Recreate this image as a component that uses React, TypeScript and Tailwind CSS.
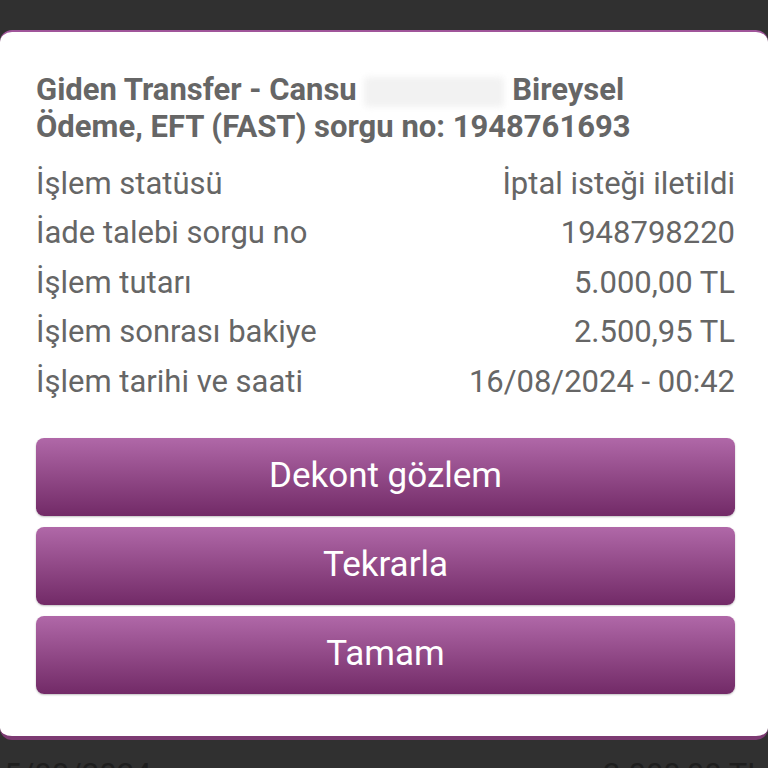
import { useState } from "react";

type Row = { label: string; value: string };

const rows: Row[] = [
  { label: "İşlem statüsü", value: "İptal isteği iletildi" },
  { label: "İade talebi sorgu no", value: "1948798220" },
  { label: "İşlem tutarı", value: "5.000,00 TL" },
  { label: "İşlem sonrası bakiye", value: "2.500,95 TL" },
  { label: "İşlem tarihi ve saati", value: "16/08/2024 - 00:42" },
];

const buttons = ["Dekont gözlem", "Tekrarla", "Tamam"];

export default function App() {
  const [open, setOpen] = useState(true);

  return (
    <div
      className="w-[768px] h-[768px] overflow-hidden bg-[#303030] flex flex-col"
      style={{ fontFamily: "Roboto, 'Noto Sans', sans-serif" }}
    >
      <div className="h-[30px] shrink-0" />

      {open && (
        <div className="shrink-0 bg-white rounded-[12px] border-t-2 border-b-[4px] border-t-[#a0559a] border-b-[#7c3a72] pl-[36px] pr-[33px] pt-[39px] pb-[42px]">
          {/* header */}
          <h2 className="text-[31px] leading-[37px] font-bold text-[#666666] whitespace-nowrap">
            Giden Transfer - Cansu{" "}
            <span className="inline-block align-middle w-[140px] h-[30px] bg-[#f2f2f2] blur-[3px] rounded" />{" "}
            Bireysel
            <br />
            Ödeme, EFT (FAST) sorgu no: 1948761693
          </h2>

          {/* details */}
          <div className="mt-[14px] flex flex-col">
            {rows.map((r) => (
              <div
                key={r.label}
                className="flex justify-between items-center h-[49.5px] text-[31px] text-[#666666]"
              >
                <span>{r.label}</span>
                <span>{r.value}</span>
              </div>
            ))}
          </div>

          {/* actions */}
          <div className="mt-[31px] flex flex-col gap-[11px]">
            {buttons.map((b) => (
              <button
                key={b}
                onClick={() => b === "Tamam" && setOpen(false)}
                className="h-[78px] w-full rounded-[8px] bg-gradient-to-b from-[#b068a8] to-[#722a67] text-white text-[35px] shadow-[0_1px_2px_rgba(0,0,0,0.25)]"
              >
                {b}
              </button>
            ))}
          </div>
        </div>
      )}

      {/* list behind the dialog */}
      <div className="flex justify-between px-[4px] pt-[12px] text-[31px] text-[#1e1e1e] whitespace-nowrap">
        <span>5/08/2024</span>
        <span>2.000,00 TL</span>
      </div>
    </div>
  );
}
